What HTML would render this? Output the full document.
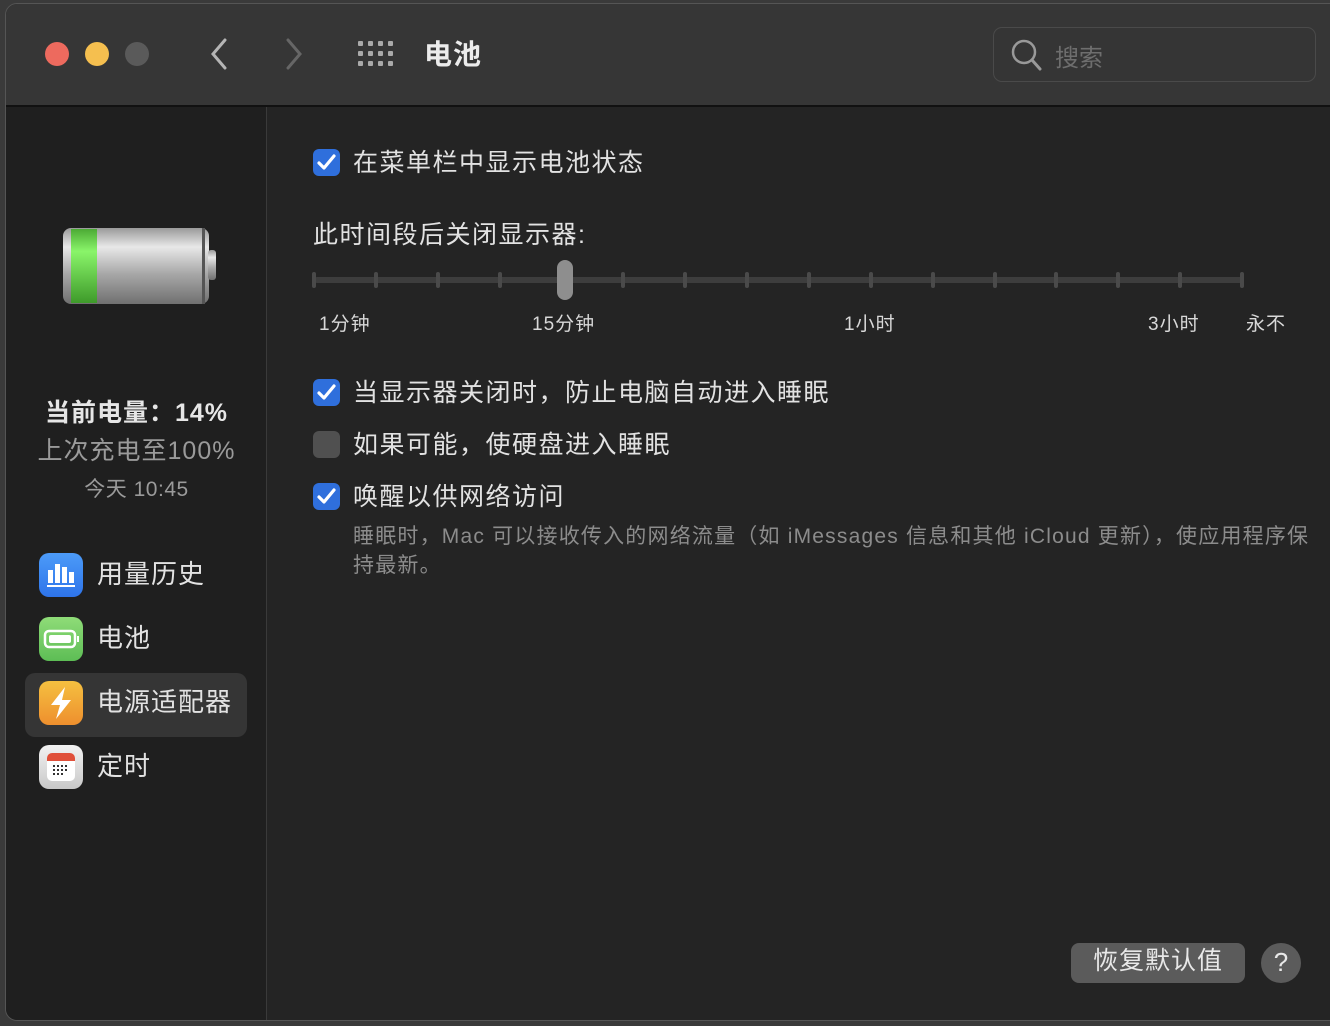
<!DOCTYPE html>
<html><head><meta charset="utf-8"><style>
*{margin:0;padding:0;box-sizing:border-box}
body{width:1330px;height:1026px;background:#3a3a3a;position:relative;overflow:hidden;font-family:"Liberation Sans","Noto Sans CJK SC",sans-serif;color:#e6e6e6}
.win{position:absolute;left:5px;top:3px;width:1340px;height:1018px;border-radius:12px;overflow:hidden;background:#242424;border:1px solid #555}
.tb{position:absolute;left:0;top:0;width:100%;height:103px;background:#363636;border-bottom:2px solid #111}
.dot{position:absolute;top:38px;width:24px;height:24px;border-radius:50%}
.side{position:absolute;left:0;top:103px;width:261px;height:920px;background:#1f1f1f;border-right:1px solid #3a3a3a}
.abs{position:absolute;white-space:nowrap}
.cb{position:absolute;width:27px;height:27px;border-radius:6px;background:#2f6fdc}
.cb svg{position:absolute;left:4px;top:5px}
.lbl{font-size:25px;color:#e2e2e2;letter-spacing:1.5px}
.tick{position:absolute;top:268px;width:4px;height:16px;border-radius:2px;background:#4a4a4a}
.ic{position:absolute;left:33px;width:44px;height:44px;border-radius:10px}
.si{font-size:26px;color:#e2e2e2;letter-spacing:1px}
</style></head><body>
<div class="win">
<div class="tb">
<div class="dot" style="left:39px;background:#ed6a5e"></div>
<div class="dot" style="left:79px;background:#f5bf4f"></div>
<div class="dot" style="left:119px;background:#5a5a5a"></div>
<svg class="abs" style="left:203px;top:34px" width="20" height="32"><path d="M16 2 L4 16 L16 30" stroke="#b5b5b5" stroke-width="3" fill="none" stroke-linecap="round"/></svg>
<svg class="abs" style="left:278px;top:34px" width="20" height="32"><path d="M4 2 L16 16 L4 30" stroke="#666" stroke-width="3" fill="none" stroke-linecap="round"/></svg>
<svg class="abs" style="left:352px;top:37px" width="36" height="28" fill="#aaa">
<rect x="0" y="0" width="5" height="5" rx="1"/><rect x="10" y="0" width="5" height="5" rx="1"/><rect x="20" y="0" width="5" height="5" rx="1"/><rect x="30" y="0" width="5" height="5" rx="1"/>
<rect x="0" y="10" width="5" height="5" rx="1"/><rect x="10" y="10" width="5" height="5" rx="1"/><rect x="20" y="10" width="5" height="5" rx="1"/><rect x="30" y="10" width="5" height="5" rx="1"/>
<rect x="0" y="20" width="5" height="5" rx="1"/><rect x="10" y="20" width="5" height="5" rx="1"/><rect x="20" y="20" width="5" height="5" rx="1"/><rect x="30" y="20" width="5" height="5" rx="1"/></svg>
<div class="abs" style="left:418px;top:29px;font-size:28px;font-weight:bold;color:#ececec;letter-spacing:1px">电池</div>
<div class="abs" style="left:987px;top:23px;width:323px;height:55px;border:1px solid #4a4a4a;border-radius:9px;background:#353535"></div>
<svg class="abs" style="left:1005px;top:35px" width="32" height="34"><circle cx="13" cy="13" r="11" stroke="#999" stroke-width="2.5" fill="none"/><path d="M21 21 L29 30" stroke="#999" stroke-width="3" stroke-linecap="round"/></svg>
<div class="abs" style="left:1049px;top:34px;font-size:24px;color:#6e6e6e">搜索</div>
</div>
<div class="side">
<svg class="abs" style="left:56px;top:118px" width="156" height="80">
<defs><linearGradient id="g" x1="0" y1="0" x2="0" y2="1"><stop offset="0" stop-color="#9a9a9a"/><stop offset=".25" stop-color="#e8e8e8"/><stop offset=".6" stop-color="#a8a8a8"/><stop offset="1" stop-color="#707070"/></linearGradient>
<linearGradient id="gg" x1="0" y1="0" x2="0" y2="1"><stop offset="0" stop-color="#4caa35"/><stop offset=".3" stop-color="#8af56a"/><stop offset="1" stop-color="#3e9a2a"/></linearGradient></defs>
<rect x="1" y="3" width="146" height="76" rx="8" fill="url(#g)"/>
<rect x="9" y="4" width="26" height="74" fill="url(#gg)"/>
<rect x="140" y="3" width="3" height="76" fill="#555"/>
<rect x="146" y="25" width="8" height="30" rx="3" fill="url(#g)"/>
</svg>
<div class="abs" style="left:0;width:261px;text-align:center;top:286px;font-size:25px;font-weight:bold;color:#e6e6e6;letter-spacing:1px">当前电量：14%</div>
<div class="abs" style="left:0;width:261px;text-align:center;top:324px;font-size:25px;color:#9a9a9a;letter-spacing:1px">上次充电至100%</div>
<div class="abs" style="left:0;width:261px;text-align:center;top:366px;font-size:21px;color:#9a9a9a;letter-spacing:.5px">今天 10:45</div>
<div class="ic" style="top:446px;background:linear-gradient(#4c9bf8,#2e74ea)"><svg width="44" height="44"><g fill="#fff"><rect x="9" y="17" width="5" height="13"/><rect x="16" y="11" width="5" height="19"/><rect x="23" y="14" width="5" height="16"/><rect x="30" y="19" width="5" height="11"/><rect x="8" y="32" width="28" height="2"/></g></svg></div>
<div class="abs si" style="left:91px;top:447px">用量历史</div>
<div class="ic" style="top:510px;background:linear-gradient(#8fdc78,#5dbd55)"><svg width="44" height="44"><rect x="6" y="14" width="30" height="16" rx="4" stroke="#fff" stroke-width="2.5" fill="none"/><rect x="10" y="18" width="22" height="8" rx="2" fill="#fff"/><rect x="38" y="19" width="2" height="6" fill="#fff"/></svg></div>
<div class="abs si" style="left:91px;top:511px">电池</div>
<div class="abs" style="left:19px;top:566px;width:222px;height:64px;border-radius:10px;background:#353535"></div>
<div class="ic" style="top:574px;background:linear-gradient(#f5c040,#ee8f2e)"><svg width="44" height="44"><path d="M26 6 L12 24 H21 L17 38 L32 19 H23 Z" fill="#fff"/></svg></div>
<div class="abs si" style="left:91px;top:575px">电源适配器</div>
<div class="ic" style="top:638px;background:linear-gradient(#f2f2f2,#c8c8c8)"><svg width="44" height="44"><rect x="8" y="8" width="28" height="28" rx="5" fill="#fff"/><path d="M8 13 a5 5 0 0 1 5 -5 h18 a5 5 0 0 1 5 5 v3 h-28z" fill="#e0503a"/><g fill="#333"><rect x="14" y="20" width="2" height="2"/><rect x="18" y="20" width="2" height="2"/><rect x="22" y="20" width="2" height="2"/><rect x="26" y="20" width="2" height="2"/><rect x="14" y="24" width="2" height="2"/><rect x="18" y="24" width="2" height="2"/><rect x="22" y="24" width="2" height="2"/><rect x="26" y="24" width="2" height="2"/><rect x="14" y="28" width="2" height="2"/><rect x="18" y="28" width="2" height="2"/><rect x="22" y="28" width="2" height="2"/></g></svg></div>
<div class="abs si" style="left:91px;top:639px">定时</div>
</div>
<div class="cb" style="left:307px;top:145px"><svg width="19" height="17"><path d="M2 9 L7 14 L17 2" stroke="#fff" stroke-width="3.2" fill="none" stroke-linecap="round" stroke-linejoin="round"/></svg></div>
<div class="abs lbl" style="left:347px;top:139px">在菜单栏中显示电池状态</div>
<div class="abs lbl" style="left:307px;top:211px">此时间段后关闭显示器:</div>
<div class="abs" style="left:308px;top:273px;width:929px;height:6px;border-radius:3px;background:#3d3d3d"></div>
<div class="tick" style="left:306px"></div><div class="tick" style="left:368px"></div><div class="tick" style="left:430px"></div><div class="tick" style="left:492px"></div><div class="tick" style="left:553px"></div><div class="tick" style="left:615px"></div><div class="tick" style="left:677px"></div><div class="tick" style="left:739px"></div><div class="tick" style="left:801px"></div><div class="tick" style="left:863px"></div><div class="tick" style="left:925px"></div><div class="tick" style="left:987px"></div><div class="tick" style="left:1048px"></div><div class="tick" style="left:1110px"></div><div class="tick" style="left:1172px"></div><div class="tick" style="left:1234px"></div>
<div class="abs" style="left:551px;top:256px;width:16px;height:40px;border-radius:8px;background:#8e8e8e"></div>
<div class="abs" style="left:313px;top:305px;font-size:19px;color:#d8d8d8;letter-spacing:1px">1分钟</div>
<div class="abs" style="left:526px;top:305px;font-size:19px;color:#d8d8d8;letter-spacing:1px">15分钟</div>
<div class="abs" style="left:838px;top:305px;font-size:19px;color:#d8d8d8;letter-spacing:1px">1小时</div>
<div class="abs" style="left:1142px;top:305px;font-size:19px;color:#d8d8d8;letter-spacing:1px">3小时</div>
<div class="abs" style="left:1240px;top:305px;font-size:19px;color:#d8d8d8;letter-spacing:1px">永不</div>
<div class="cb" style="left:307px;top:375px"><svg width="19" height="17"><path d="M2 9 L7 14 L17 2" stroke="#fff" stroke-width="3.2" fill="none" stroke-linecap="round" stroke-linejoin="round"/></svg></div>
<div class="abs lbl" style="left:347px;top:369px">当显示器关闭时，防止电脑自动进入睡眠</div>
<div class="cb" style="left:307px;top:427px;background:#505050"></div>
<div class="abs lbl" style="left:347px;top:421px">如果可能，使硬盘进入睡眠</div>
<div class="cb" style="left:307px;top:479px"><svg width="19" height="17"><path d="M2 9 L7 14 L17 2" stroke="#fff" stroke-width="3.2" fill="none" stroke-linecap="round" stroke-linejoin="round"/></svg></div>
<div class="abs lbl" style="left:347px;top:473px">唤醒以供网络访问</div>
<div class="abs" style="left:347px;top:518px;font-size:21px;line-height:29px;color:#8c8c8c;letter-spacing:1.2px">睡眠时，Mac 可以接收传入的网络流量（如 iMessages 信息和其他 iCloud 更新），使应用程序保<br>持最新。</div>
<div class="abs" style="left:1065px;top:939px;width:174px;height:40px;border-radius:8px;background:#5b5b5b;color:#e8e8e8;font-size:25px;text-align:center;line-height:36px;letter-spacing:1px">恢复默认值</div>
<div class="abs" style="left:1255px;top:939px;width:40px;height:40px;border-radius:50%;background:#5b5b5b;color:#e8e8e8;font-size:26px;text-align:center;line-height:38px">?</div>
</div>
</body></html>
